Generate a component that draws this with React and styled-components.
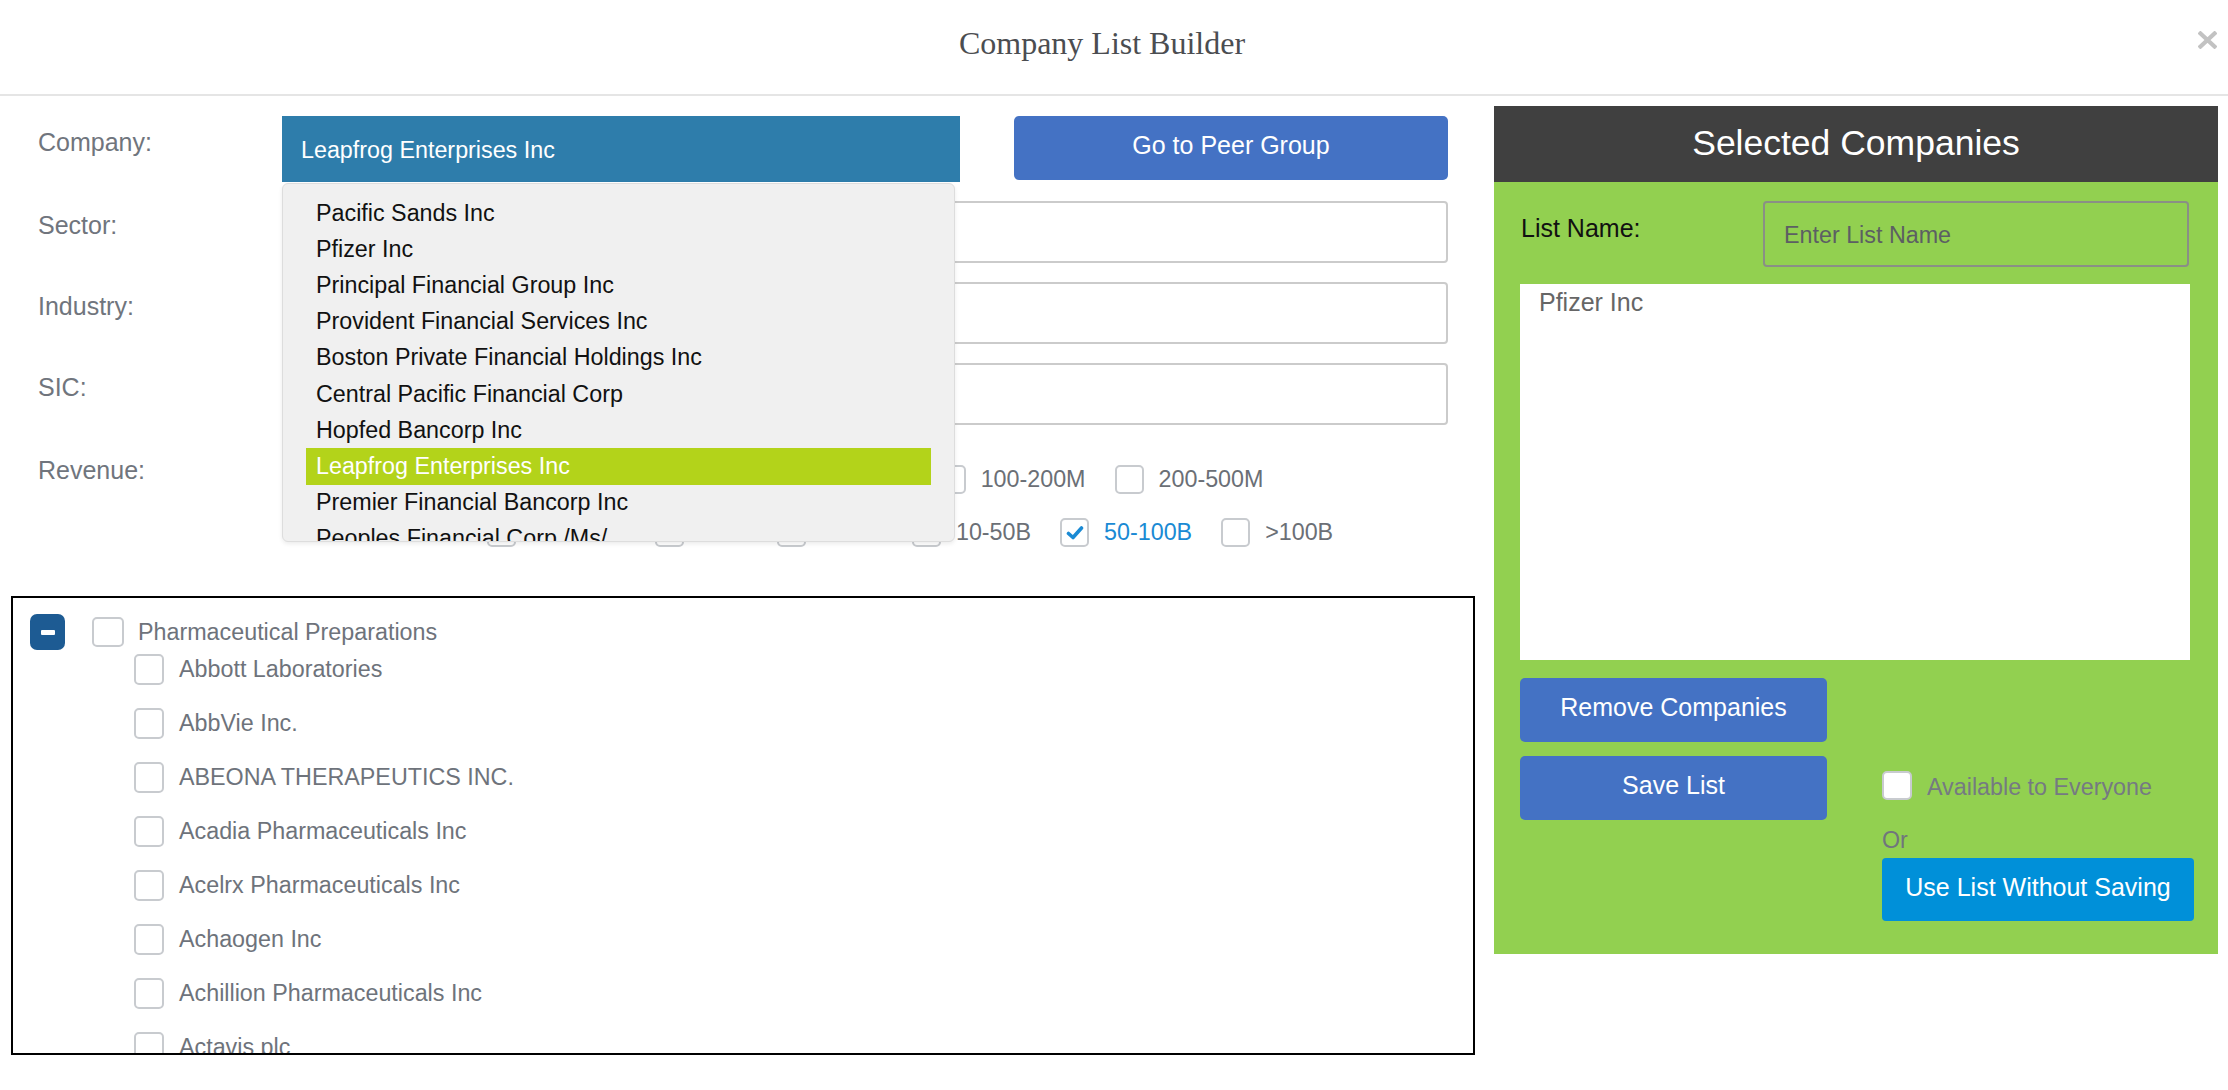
import styled, { createGlobalStyle } from 'styled-components';

const GlobalStyle = createGlobalStyle`
  * { box-sizing: border-box; }
  body {
    margin: 0;
    background: #fff;
    font-family: "Liberation Sans", Arial, sans-serif;
  }
`;

const Modal = styled.div`
  width: 2228px;
  height: 1090px;
  overflow: hidden;
  background: #fff;
`;

const Header = styled.div`
  display: flex;
  align-items: center;
  height: 96px;
  padding-left: 6px;
  border-bottom: 2px solid #e5e5e5;
`;

const Title = styled.h1`
  flex: 1;
  margin: 0;
  padding-bottom: 7px;
  text-align: center;
  font-family: "Liberation Serif", "Times New Roman", serif;
  font-weight: normal;
  font-size: 32px;
  color: #4b4d51;
`;

const CloseButton = styled.button`
  width: 19px;
  height: 18px;
  margin: 0 11px 14px 0;
  padding: 0;
  border: 0;
  background: none;
  display: flex;
`;

const Body = styled.div`
  display: flex;
  align-items: flex-start;
  padding: 10px 10px 0 11px;
`;

const LeftCol = styled.div`
  width: 1464px;
  flex-shrink: 0;
`;

const Form = styled.div`
  display: flex;
  flex-direction: column;
  gap: 19px;
  padding: 10px 27px 0 27px;
`;

const FormRow = styled.div`
  display: flex;
  align-items: ${(p) => (p.$top ? 'flex-start' : 'center')};
  margin-top: ${(p) => (p.$top ? '21px' : '0')};
`;

const Label = styled.div`
  width: 244px;
  flex-shrink: 0;
  font-size: 25px;
  color: #70757d;
  padding-bottom: ${(p) => (p.$top ? '0' : '14px')};
  margin-top: ${(p) => (p.$top ? '-9px' : '0')};
`;

const SelectWrap = styled.div`
  position: relative;
  width: 678px;
`;

const SelectBox = styled.div`
  height: 66px;
  display: flex;
  align-items: center;
  padding: 2px 0 0 19px;
  background: #2e7dab;
  color: #fff;
  font-size: 23.3px;
`;

const Dropdown = styled.div`
  position: absolute;
  top: 67px;
  left: 0;
  width: 673px;
  height: 359px;
  padding: 11px 23px 0 23px;
  background: #f0f0f0;
  border: 1px solid #dddddd;
  border-radius: 6px;
  box-shadow: 0 2px 4px rgba(0, 0, 0, 0.08);
  overflow: hidden;
  z-index: 5;
`;

const DropItem = styled.div`
  height: 36.2px;
  display: flex;
  align-items: center;
  padding-left: 10px;
  font-size: 23.3px;
  white-space: nowrap;
  color: ${(p) => (p.$active ? '#fff' : '#111')};
  background: ${(p) => (p.$active ? '#b3d31a' : 'transparent')};
`;

const Button = styled.button`
  border: 0;
  border-radius: ${(p) => p.$radius || '5px'};
  background: ${(p) => p.$bg || '#4472c4'};
  color: #fff;
  font-family: "Liberation Sans", Arial, sans-serif;
  font-size: 25px;
  height: ${(p) => p.$h || '64px'};
  width: ${(p) => p.$w || 'auto'};
  padding: 0 0 5px;
`;

const PeerButton = styled(Button)`
  margin-left: 54px;
  align-self: flex-start;
`;

const TextInput = styled.div`
  flex: 1;
  height: 62px;
  background: #fff;
  border: 2px solid #cbcbcb;
  border-radius: 4px;
`;

const OptionRows = styled.div`
  display: flex;
  flex-direction: column;
  gap: 24px;
`;

const OptionRow = styled.div`
  display: flex;
  padding-left: ${(p) => p.$indent || '0'};
`;

const OptionItem = styled.label`
  display: flex;
  align-items: center;
  gap: 15px;
  margin-right: 29px;
  font-size: 23.3px;
  white-space: nowrap;
  color: ${(p) => (p.$checked ? '#1a8ad4' : '#6b6f76')};
`;

const Box = styled.span`
  width: ${(p) => p.$w || '29px'};
  height: ${(p) => p.$h || '29px'};
  flex-shrink: 0;
  display: flex;
  align-items: center;
  justify-content: center;
  background: #fff;
  border: 2px solid #c8cbcf;
  border-radius: 5px;
`;

const TreeBox = styled.div`
  margin-top: 49px;
  height: 459px;
  border: 2px solid #000;
  overflow: hidden;
  padding: 16px 0 0 17px;
`;

const ParentRow = styled.div`
  display: flex;
  align-items: center;
  height: 36px;
`;

const MinusButton = styled.span`
  width: 35px;
  height: 36px;
  border-radius: 7px;
  background: #1d5b93;
  display: flex;
  align-items: center;
  justify-content: center;
  margin-right: 27px;

  &::after {
    content: '';
    width: 14px;
    height: 5px;
    border-radius: 1px;
    background: #fff;
  }
`;

const TreeText = styled.span`
  font-size: 23.3px;
  color: #6e737b;
  white-space: nowrap;
`;

const ParentText = styled(TreeText)`
  margin-left: 14px;
`;

const ChildList = styled.div`
  margin: 4px 0 0 104px;
`;

const ChildRow = styled.div`
  display: flex;
  align-items: center;
  gap: 15px;
  height: 31px;
  margin-bottom: 23px;
`;

const Panel = styled.div`
  width: 724px;
  flex-shrink: 0;
  margin-left: 19px;
  padding-bottom: 33px;
  background: #92d050;
`;

const PanelHeader = styled.div`
  height: 76px;
  display: flex;
  align-items: center;
  justify-content: center;
  padding-bottom: 2px;
  background: #404040;
  color: #fff;
  font-size: 35.5px;
`;

const ListNameRow = styled.div`
  display: flex;
  align-items: center;
  padding: 19px 29px 0 27px;
`;

const ListLabel = styled.div`
  width: 242px;
  flex-shrink: 0;
  font-size: 25px;
  color: #111;
  padding-bottom: 12px;
`;

const ListInput = styled.input`
  flex: 1;
  height: 66px;
  padding: 3px 0 0 19px;
  border: 2px solid #8a8f86;
  border-radius: 4px;
  background: transparent;
  font-family: "Liberation Sans", Arial, sans-serif;
  font-size: 23.3px;
  outline: none;

  &::placeholder {
    color: #5c5f63;
  }
`;

const SelectedList = styled.div`
  height: 376px;
  margin: 17px 28px 0 26px;
  padding: 4px 0 0 19px;
  background: #fff;
  font-size: 25px;
  color: #666;
`;

const Actions = styled.div`
  display: grid;
  grid-template-columns: 307px 1fr;
  column-gap: 55px;
  margin: 18px 24px 0 26px;
`;

const ActionCol = styled.div`
  display: flex;
  flex-direction: column;
  gap: ${(p) => p.$gap || '0'};
  padding-top: ${(p) => p.$pt || '0'};
`;

const AvailRow = styled.label`
  display: flex;
  align-items: center;
  gap: 15px;
  font-size: 23.3px;
  color: #757a82;

  & > span:last-child {
    padding-top: 4px;
  }
`;

const OrText = styled.div`
  margin: 26px 0 4px;
  font-size: 23.3px;
  color: #70757d;
`;

const companies = [
  'Pacific Sands Inc',
  'Pfizer Inc',
  'Principal Financial Group Inc',
  'Provident Financial Services Inc',
  'Boston Private Financial Holdings Inc',
  'Central Pacific Financial Corp',
  'Hopfed Bancorp Inc',
  'Leapfrog Enterprises Inc',
  'Premier Financial Bancorp Inc',
  'Peoples Financial Corp /Ms/',
];

const revenueRows = [
  { indent: '0', options: ['All Revenue', '0-10M', '10-50M', '50-100M', '100-200M', '200-500M'] },
  { indent: '205px', options: ['500M-1B', '1-5B', '5-10B', '10-50B', '50-100B', '>100B'] },
];

const pharma = [
  'Abbott Laboratories',
  'AbbVie Inc.',
  'ABEONA THERAPEUTICS INC.',
  'Acadia Pharmaceuticals Inc',
  'Acelrx Pharmaceuticals Inc',
  'Achaogen Inc',
  'Achillion Pharmaceuticals Inc',
  'Actavis plc',
];

function Check({ checked, w, h }) {
  return (
    <Box $w={w} $h={h}>
      {checked && (
        <svg width="18" height="16" viewBox="0 0 18 16">
          <path d="M2.5 8.5 L7 12.5 L15.5 3" fill="none" stroke="#1a8ad4" strokeWidth="3.6" strokeLinecap="round" strokeLinejoin="round" />
        </svg>
      )}
    </Box>
  );
}

function App() {
  const selected = 'Leapfrog Enterprises Inc';

  return (
    <Modal>
      <GlobalStyle />
      <Header>
        <Title>Company List Builder</Title>
        <CloseButton aria-label="close">
          <svg width="19" height="18" viewBox="0 0 19 18">
            <path d="M2.5 2.5 L16.5 15.5 M16.5 2.5 L2.5 15.5" stroke="#c2c2c2" strokeWidth="4.2" strokeLinecap="square" />
          </svg>
        </CloseButton>
      </Header>

      <Body>
        <LeftCol>
          <Form>
            <FormRow>
              <Label>Company:</Label>
              <SelectWrap>
                <SelectBox>{selected}</SelectBox>
                <Dropdown>
                  {companies.map((c) => (
                    <DropItem key={c} $active={c === selected}>{c}</DropItem>
                  ))}
                </Dropdown>
              </SelectWrap>
              <PeerButton $w="434px">Go to Peer Group</PeerButton>
            </FormRow>
            <FormRow>
              <Label>Sector:</Label>
              <TextInput />
            </FormRow>
            <FormRow>
              <Label>Industry:</Label>
              <TextInput />
            </FormRow>
            <FormRow>
              <Label>SIC:</Label>
              <TextInput />
            </FormRow>
            <FormRow $top>
              <Label $top>Revenue:</Label>
              <OptionRows>
                {revenueRows.map((row, i) => (
                  <OptionRow key={i} $indent={row.indent}>
                    {row.options.map((opt) => (
                      <OptionItem key={opt} $checked={opt === '50-100B'}>
                        <Check checked={opt === '50-100B'} />
                        {opt}
                      </OptionItem>
                    ))}
                  </OptionRow>
                ))}
              </OptionRows>
            </FormRow>
          </Form>

          <TreeBox>
            <ParentRow>
              <MinusButton />
              <Check w="32px" h="30px" />
              <ParentText>Pharmaceutical Preparations</ParentText>
            </ParentRow>
            <ChildList>
              {pharma.map((p) => (
                <ChildRow key={p}>
                  <Check w="30px" h="31px" />
                  <TreeText>{p}</TreeText>
                </ChildRow>
              ))}
            </ChildList>
          </TreeBox>
        </LeftCol>

        <Panel>
          <PanelHeader>Selected Companies</PanelHeader>
          <ListNameRow>
            <ListLabel>List Name:</ListLabel>
            <ListInput placeholder="Enter List Name" />
          </ListNameRow>
          <SelectedList>Pfizer Inc</SelectedList>
          <Actions>
            <ActionCol $gap="14px">
              <Button $w="307px">Remove Companies</Button>
              <Button $w="307px">Save List</Button>
            </ActionCol>
            <ActionCol $pt="92px">
              <AvailRow>
                <Check w="30px" h="29px" />
                <span>Available to Everyone</span>
              </AvailRow>
              <OrText>Or</OrText>
              <Button $bg="#0090d9" $h="63px" $radius="4px">Use List Without Saving</Button>
            </ActionCol>
          </Actions>
        </Panel>
      </Body>
    </Modal>
  );
}

export default App;
